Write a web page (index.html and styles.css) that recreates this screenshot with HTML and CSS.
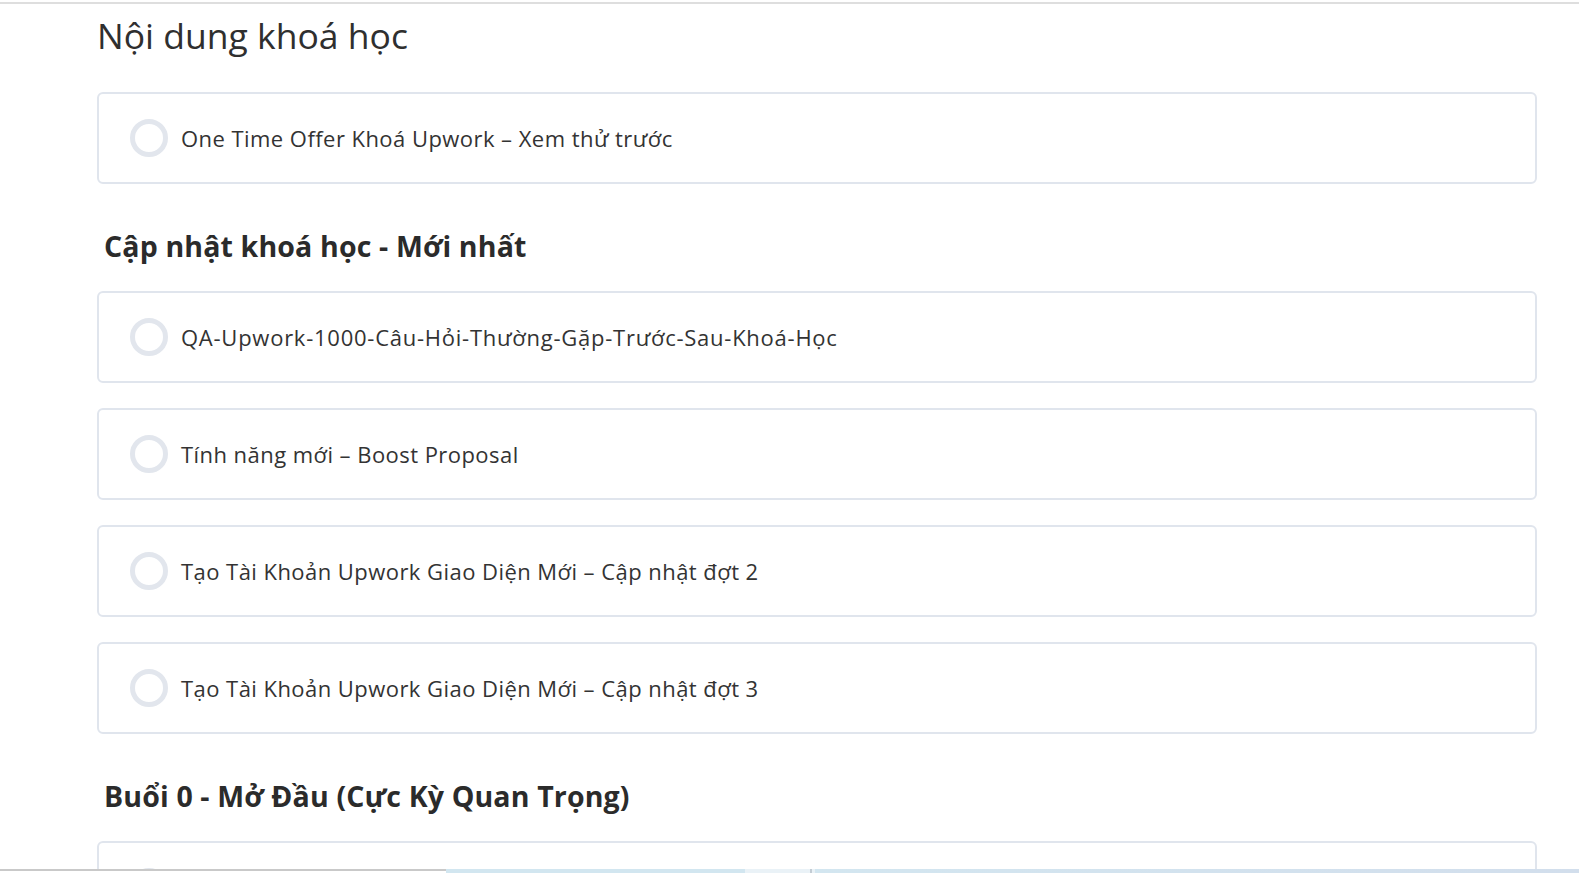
FILE: index.html
```html
<!DOCTYPE html>
<html lang="vi">
<head>
<meta charset="utf-8">
<title>Nội dung khoá học</title>
<link rel="stylesheet" href="styles.css">
</head>
<body>
<div class="page">
  <h1 class="title">Nội dung khoá học</h1>
  <div class="list">
    <div class="card"><span class="ring"></span><span class="label">One Time Offer Khoá Upwork – Xem thử trước</span></div>
  </div>
  <h2 class="section">Cập nhật khoá học - Mới nhất</h2>
  <div class="list">
    <div class="card"><span class="ring"></span><span class="label label-wide">QA-Upwork-1000-Câu-Hỏi-Thường-Gặp-Trước-Sau-Khoá-Học</span></div>
    <div class="card"><span class="ring"></span><span class="label">Tính năng mới – Boost Proposal</span></div>
    <div class="card"><span class="ring"></span><span class="label">Tạo Tài Khoản Upwork Giao Diện Mới – Cập nhật đợt 2</span></div>
    <div class="card"><span class="ring"></span><span class="label">Tạo Tài Khoản Upwork Giao Diện Mới – Cập nhật đợt 3</span></div>
  </div>
  <h2 class="section">Buổi 0 - Mở Đầu (Cực Kỳ Quan Trọng)</h2>
  <div class="list">
    <div class="card"><span class="ring"></span><span class="label"></span></div>
  </div>
</div>
<div class="bottombar">
  <span class="seg seg-gray"></span>
  <span class="seg seg-blue"></span>
  <span class="seg seg-pale"></span>
  <span class="seg seg-div"></span>
  <span class="seg seg-pale2"></span>
  <span class="seg seg-blue2"></span>
</div>
</body>
</html>
```

FILE: styles.css
```css
html, body {
  margin: 0;
  padding: 0;
  background: #ffffff;
  height: 100%;
  overflow: hidden;
}
body {
  font-family: "Open Sans", "Noto Sans", "Liberation Sans", sans-serif;
  color: #333333;
}
.page {
  margin-top: 2px;
  border-top: 2px solid #dedede;
  padding: 0 42px 0 97px;
}
.title {
  margin: 9px 0 0 0;
  font-size: 35.5px;
  font-weight: 400;
  line-height: 44px;
  color: #2f2f2f;
}
.list {
  display: flex;
  flex-direction: column;
  gap: 25px;
}
.title + .list {
  margin-top: 35px;
}
.card {
  box-sizing: border-box;
  height: 92px;
  border: 2px solid #e0e5ed;
  border-radius: 6px;
  display: flex;
  align-items: center;
  padding-left: 31px;
  gap: 13px;
}
.ring {
  box-sizing: border-box;
  width: 38px;
  height: 38px;
  border: 5px solid #e2e6ed;
  border-radius: 50%;
  flex: none;
}
.label {
  font-size: 22px;
  color: #333333;
  letter-spacing: 0.45px;
}
.label-wide {
  letter-spacing: 0.75px;
}
.section {
  margin: 0;
  padding-left: 7px;
  font-size: 28.5px;
  font-weight: 700;
  line-height: 36px;
  color: #2b2b2b;
  letter-spacing: 0.15px;
}
.list + .section {
  margin-top: 44px;
  margin-bottom: 27px;
}
.bottombar {
  position: fixed;
  left: 0;
  right: 0;
  bottom: 0;
  height: 4px;
  display: flex;
}
.seg { display: block; height: 4px; }
.seg-gray { width: 446px; border-top: 2px solid #c9c9c9; box-sizing: border-box; background: #ffffff; }
.seg-blue { width: 299px; background: #d2e6f0; }
.seg-pale { width: 65px; background: #eaf2f7; }
.seg-div { width: 2px; background: #c3ccd4; }
.seg-pale2 { width: 3px; background: #eaf2f7; }
.seg-blue2 { flex: 1; background: linear-gradient(90deg, #d3e6f0, #d2deec); }
```
